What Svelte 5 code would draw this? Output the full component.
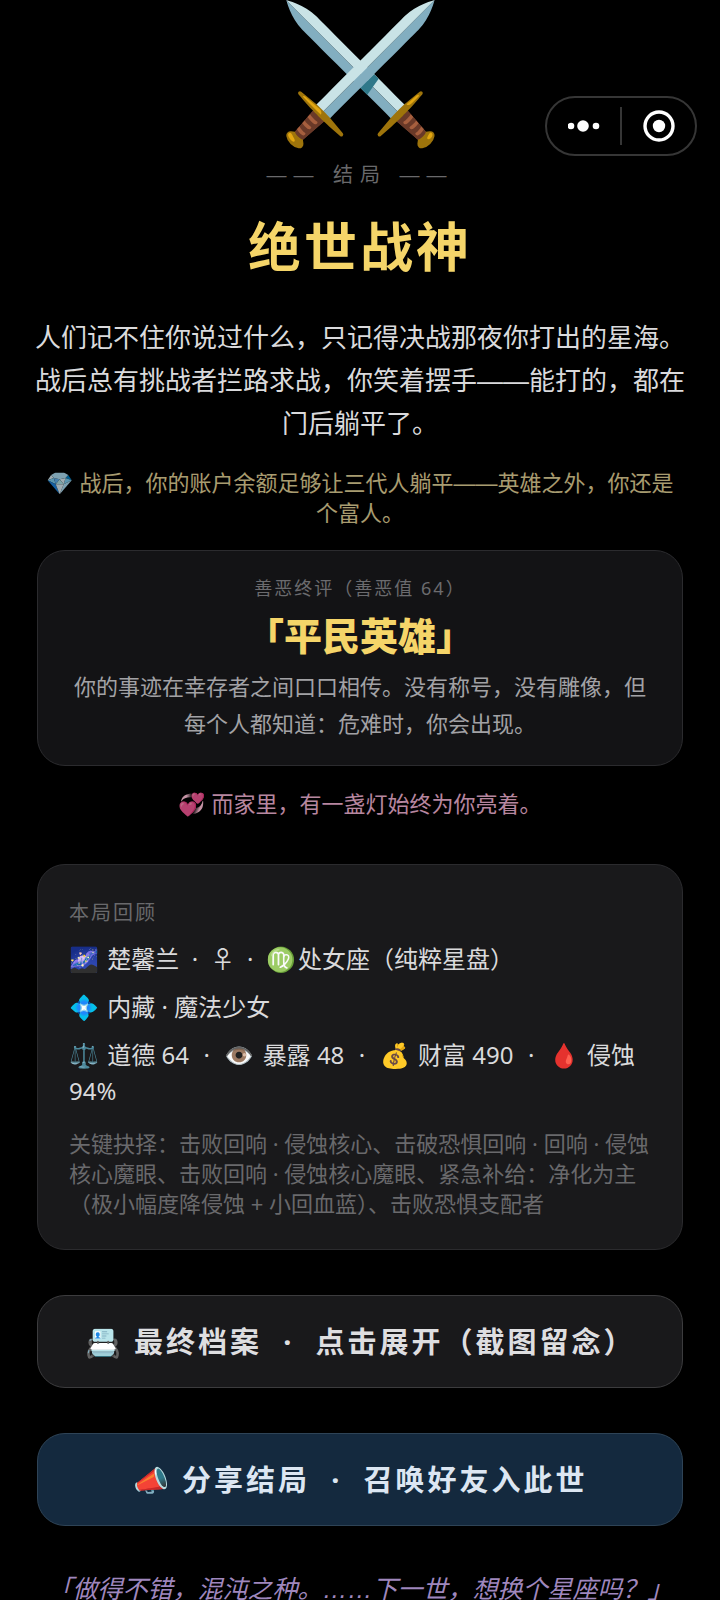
<script lang="ts">
  type Stat = { icon: string; label: string; value: string };

  const stats: Stat[] = [
    { icon: "⚖️", label: "道德", value: "64" },
    { icon: "👁️", label: "暴露", value: "48" },
    { icon: "💰", label: "财富", value: "490" },
    { icon: "🩸", label: "侵蚀", value: "94%" },
  ];

  const choices: string[] = [
    "击败回响 · 侵蚀核心",
    "击破恐惧回响 · 回响 · 侵蚀核心魔眼",
    "击败回响 · 侵蚀核心魔眼",
    "紧急补给：净化为主（极小幅度降侵蚀 + 小回血蓝）",
    "击败恐惧支配者",
  ];

  const dot = "\u00a0 ·\u00a0 ";
</script>

<div class="capsule">
  <button class="capsule-button" aria-label="更多">
    <svg width="32" height="32" viewBox="0 0 32 32" fill="#fff">
      <circle cx="3" cy="16" r="3.3" />
      <circle cx="15" cy="16" r="5.8" />
      <circle cx="28" cy="16" r="3.3" />
    </svg>
  </button>
  <span class="divider"></span>
  <button class="capsule-button" aria-label="关闭">
    <svg width="32" height="32" viewBox="0 0 32 32">
      <circle cx="16" cy="16" r="14" fill="none" stroke="#fff" stroke-width="3.4" />
      <circle cx="16" cy="16" r="6.2" fill="#fff" />
    </svg>
  </button>
</div>

<main class="ending" lang="zh-CN">
  <div class="emblem">⚔️</div>
  <div class="kicker">—— 结局 ——</div>
  <h1>绝世战神</h1>

  <p class="story">
    人们记不住你说过什么，只记得决战那夜你打出的星海。战后总有挑战者拦路求战，你笑着摆手——能打的，都在门后躺平了。
  </p>
  <p class="note wealth">💎 战后，你的账户余额足够让三代人躺平——英雄之外，你还是个富人。</p>

  <section class="card verdict">
    <div class="verdict-label">善恶终评（善恶值 64）</div>
    <h2>「平民英雄」</h2>
    <p>你的事迹在幸存者之间口口相传。没有称号，没有雕像，但每个人都知道：危难时，你会出现。</p>
  </section>

  <p class="note love">💞 而家里，有一盏灯始终为你亮着。</p>

  <section class="card review">
    <h3>本局回顾</h3>
    <p><span class="icon">🌌</span> 楚馨兰{dot}♀{dot}<span class="icon">♍</span>处女座（纯粹星盘）</p>
    <p><span class="icon">💠</span> 内藏 · 魔法少女</p>
    <p>
      {#each stats as stat, i}
        {#if i > 0}<span class="sep">{dot}</span>{/if}<span class="icon">{stat.icon}</span> <span>{stat.label}</span> <span>{stat.value}</span>{/each}
    </p>
    <p class="choices">关键抉择：{choices.join("、")}</p>
  </section>

  <button class="action">📇 最终档案{dot}点击展开（截图留念）</button>
  <button class="action share">📣 分享结局{dot}召唤好友入此世</button>

  <p class="quote">「做得不错，混沌之种。……下一世，想换个星座吗？」</p>
</main>

<style>
  :global(body) {
    background: #000;
    overflow-x: hidden;
  }

  .ending {
    box-sizing: border-box;
    display: flex;
    flex-direction: column;
    padding: 0 37px;
    overflow: hidden;
    color: #dadadc;
    font-family: "Liberation Sans", "Noto Sans CJK SC", sans-serif;
    text-align: center;
  }

  h1,
  h2,
  h3,
  p {
    margin: 0;
  }

  .capsule {
    position: absolute;
    top: 96px;
    right: 23px;
    box-sizing: border-box;
    display: flex;
    align-items: center;
    width: 152px;
    height: 60px;
    border: 2px solid #363636;
    border-radius: 30px;
  }

  .capsule-button {
    flex: 1;
    display: flex;
    justify-content: center;
    padding: 0;
    border: none;
    background: none;
  }

  .divider {
    width: 2px;
    height: 38px;
    background: #363636;
  }

  .emblem {
    font-size: 134px;
    line-height: 148px;
  }

  .kicker {
    margin-top: 12px;
    color: #69696b;
    font-size: 20px;
    line-height: 30px;
    letter-spacing: 7px;
  }

  h1 {
    margin-top: 20px;
    color: #f5d569;
    font-size: 53px;
    font-weight: 700;
    line-height: 78px;
    letter-spacing: 3px;
  }

  .story {
    margin: 29px -4px 0;
    font-size: 26px;
    line-height: 43px;
  }

  .note {
    font-size: 22px;
    line-height: 30px;
  }

  .wealth {
    margin-top: 23px;
    padding: 0 8px;
    color: #efdfa0;
    opacity: 0.7;
  }

  .love {
    margin: 24px 0 44px;
    color: #eeb0d0;
    opacity: 0.77;
  }

  .card {
    border: 1px solid #2b2b2e;
    border-radius: 28px;
    font-family: "Noto Sans", "Noto Sans CJK SC", sans-serif;
  }

  .verdict {
    margin-top: 21px;
    padding: 23px 30px;
    background: #131315;
  }

  .verdict-label {
    color: #6b6b6e;
    font-size: 18px;
    line-height: 28px;
    letter-spacing: 2px;
  }

  h2 {
    margin: 5px 0;
    color: #f5d569;
    font-size: 38px;
    font-weight: 900;
    line-height: 56px;
  }

  .verdict p {
    color: #a2a2a5;
    font-size: 22px;
    line-height: 37px;
  }

  .review {
    padding: 31px;
    background: #19191b;
    text-align: left;
  }

  h3 {
    color: #69696c;
    font-size: 20px;
    font-weight: 400;
    line-height: 33px;
    letter-spacing: 2px;
  }

  .review p {
    margin-top: 12px;
    font-size: 24px;
    line-height: 36px;
  }

  .icon {
    margin-right: 2px;
  }

  .sep {
    margin: 0 2px;
  }

  .review .choices {
    margin-top: 19px;
    color: #69696c;
    font-size: 22px;
    line-height: 30px;
  }

  .action {
    margin-top: 45px;
    height: 93px;
    padding: 0 0 4px;
    border: 1px solid #3c3c3e;
    border-radius: 28px;
    background: #19191b;
    color: #dedee0;
    font-family: "Noto Sans", "Noto Sans CJK SC", sans-serif;
    font-size: 29px;
    font-weight: 700;
    letter-spacing: 3px;
  }

  .share {
    border-color: #2e4356;
    background: #14293e;
    color: #dce6f2;
  }

  .quote {
    margin-top: 42px;
    color: #9f87bd;
    font-size: 25px;
    font-style: italic;
    line-height: 43px;
    white-space: nowrap;
  }
</style>
